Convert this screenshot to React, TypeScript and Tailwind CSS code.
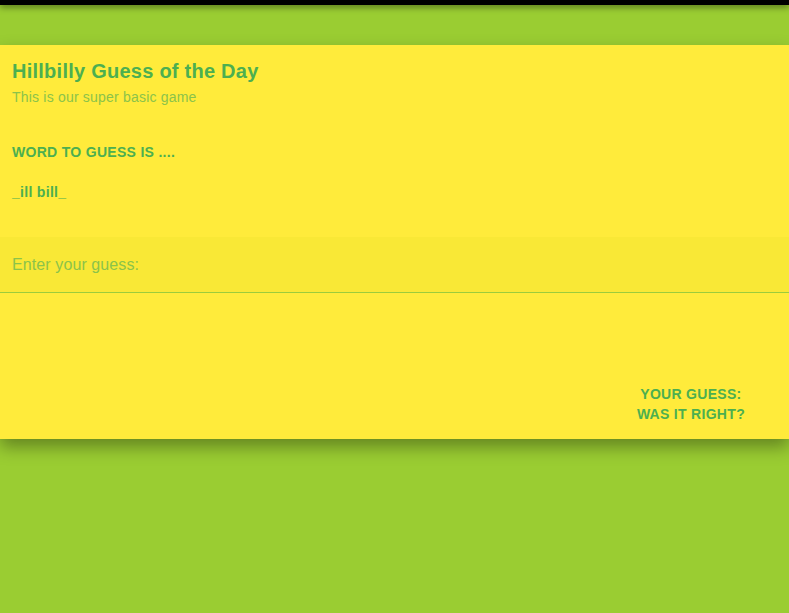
import React, { useState } from 'react';

export default function App() {
  const [guess, setGuess] = useState('');

  return (
    <div className="min-h-[613px] bg-[#9acd32] font-['Liberation_Sans',Arial,sans-serif]">
      {/* top bar */}
      <div className="h-[5px] bg-black shadow-[0_2px_6px_rgba(0,0,0,0.5)]" />

      <div className="pt-[40px]">
        <div className="bg-[#ffeb3b] shadow-[0_8px_16px_rgba(0,0,0,0.35)]">
          <div className="px-3 pt-[13px]">
            <h1 className="text-[20px] leading-[26px] tracking-[0.25px] font-bold text-[#4caf50]">Hillbilly Guess of the Day</h1>
            <p className="mt-[4px] text-[14px] leading-[18px] tracking-[0.2px] text-[#8bc34a]">This is our super basic game</p>

            <div className="mt-[38px] text-[14px] leading-[16px] tracking-[0.3px] font-bold uppercase text-[#4caf50]">
              Word to guess is ....
            </div>
            <div className="mt-[24px] text-[14px] leading-[16px] tracking-[0.3px] font-bold text-[#4caf50]">_ill bill_</div>
          </div>

          <div className="mt-[37px] bg-[#f9e836]">
            <input
              value={guess}
              onChange={(e) => setGuess(e.target.value)}
              placeholder="Enter your guess:"
              className="block w-full h-[55px] px-3 bg-transparent text-[16px] tracking-[0.1px] text-[#4caf50] placeholder:text-[#8bc34a] outline-none"
            />
            <div className="h-px bg-[#9ccc3c]" />
          </div>

          <div className="flex justify-end pr-[44px] pt-[91px] pb-[15px]">
            <div className="text-center text-[14px] leading-[20px] tracking-[0.3px] font-bold uppercase text-[#4caf50]">
              <div>Your guess: {guess}</div>
              <div>Was it right?</div>
            </div>
          </div>
        </div>
      </div>
    </div>
  );
}
